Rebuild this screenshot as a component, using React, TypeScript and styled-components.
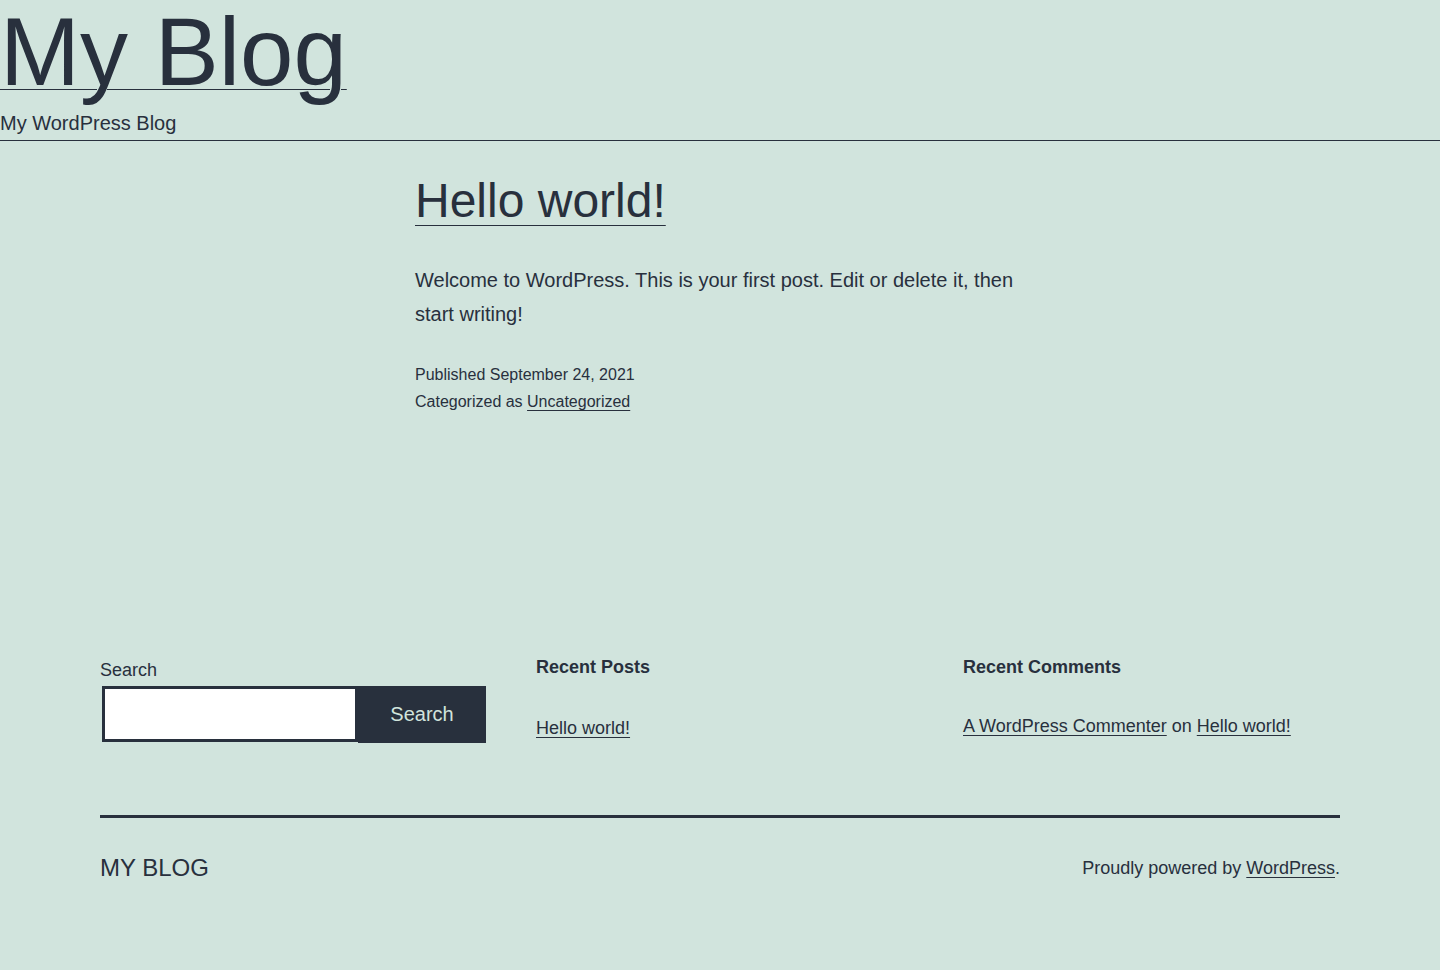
import styled, { createGlobalStyle } from "styled-components";

const ink = "#28303d";
const mint = "#d1e4dd";

const GlobalStyle = createGlobalStyle`
    html, body {
        margin: 0;
        padding: 0;
        background: ${ mint };
        color: ${ ink };
        font-family: "Liberation Sans", Arial, sans-serif;
    }
    a {
        color: ${ ink };
        text-decoration: underline;
        text-decoration-thickness: 1px;
        text-underline-offset: 3px;
    }
`;

const Page = styled.div`
    min-height: 970px;
    display: flex;
    flex-direction: column;
`;

const Header = styled.header`
    border-bottom: 1px solid ${ ink };
    padding-bottom: 5px;
`;

const SiteTitle = styled.h1`
    margin: 0;
    font-size: 96px;
    font-weight: 400;
    line-height: 104px;

    a {
        text-underline-offset: 4px;
    }
`;

const Tagline = styled.p`
    margin: 8px 0 0;
    font-size: 20px;
    line-height: 23px;
`;

const Main = styled.main`
    width: 610px;
    margin: 31px auto 0;
`;

const PostTitle = styled.h2`
    margin: 0;
    font-size: 48px;
    font-weight: 400;
    line-height: 58px;

    a {
        text-underline-offset: 8px;
    }
`;

const PostBody = styled.p`
    margin: 33px 0 0;
    font-size: 20px;
    line-height: 34px;
`;

const Meta = styled.div`
    margin-top: 30px;
    font-size: 16px;
    line-height: 27px;
`;

const Widgets = styled.section`
    display: grid;
    grid-template-columns: 386px 1fr 1fr;
    column-gap: 50px;
    width: 1240px;
    margin: 239px auto 0;
    align-items: start;
`;

const Widget = styled.div`
    display: flex;
    flex-direction: column;
`;

const SearchLabel = styled.label`
    font-size: 18px;
    line-height: 27px;
    margin-top: 3px;
`;

const SearchRow = styled.div`
    display: flex;
    margin-top: 2px;
`;

const SearchInput = styled.input`
    box-sizing: border-box;
    width: 256px;
    height: 56px;
    margin: 0 0 0 2px;
    border: 3px solid ${ ink };
    background: #fff;
    outline: none;
    font-size: 18px;
`;

const SearchButton = styled.button`
    box-sizing: border-box;
    width: 128px;
    height: 57px;
    border: none;
    background: ${ ink };
    color: ${ mint };
    font-family: "Liberation Sans", Arial, sans-serif;
    font-size: 20px;
    cursor: pointer;
`;

const WidgetTitle = styled.h2`
    margin: 0;
    font-size: 18px;
    font-weight: 700;
    line-height: 27px;
`;

const WidgetList = styled.ul<{ $gap: number }>`
    list-style: none;
    margin: ${ (props) => props.$gap + "px" } 0 0;
    padding: 0;
    font-size: 18px;
    line-height: 27px;
`;

const Footer = styled.footer`
    width: 1240px;
    margin: 72px auto 0;
    border-top: 3px solid ${ ink };
    display: flex;
    justify-content: space-between;
    align-items: center;
    padding-top: 35px;
`;

const FooterName = styled.div`
    font-size: 24px;
    line-height: 30px;
    text-transform: uppercase;
`;

const PoweredBy = styled.div`
    font-size: 18px;
    line-height: 27px;
`;

export default function App() {
    return (
        <Page>
            <GlobalStyle />
            <Header>
                <SiteTitle><a href="#">My Blog</a></SiteTitle>
                <Tagline>My WordPress Blog</Tagline>
            </Header>

            <Main>
                <PostTitle><a href="#">Hello world!</a></PostTitle>
                <PostBody>Welcome to WordPress. This is your first post. Edit or delete it, then start writing!</PostBody>
                <Meta>
                    <div>Published September 24, 2021</div>
                    <div>Categorized as <a href="#">Uncategorized</a></div>
                </Meta>
            </Main>

            <Widgets>
                <Widget>
                    <SearchLabel htmlFor="s">Search</SearchLabel>
                    <SearchRow>
                        <SearchInput id="s" type="search" />
                        <SearchButton>Search</SearchButton>
                    </SearchRow>
                </Widget>
                <Widget>
                    <WidgetTitle>Recent Posts</WidgetTitle>
                    <WidgetList $gap={34}>
                        <li><a href="#">Hello world!</a></li>
                    </WidgetList>
                </Widget>
                <Widget>
                    <WidgetTitle>Recent Comments</WidgetTitle>
                    <WidgetList $gap={32}>
                        <li><a href="#">A WordPress Commenter</a> on <a href="#">Hello world!</a></li>
                    </WidgetList>
                </Widget>
            </Widgets>

            <Footer>
                <FooterName>My Blog</FooterName>
                <PoweredBy>Proudly powered by <a href="#">WordPress</a>.</PoweredBy>
            </Footer>
        </Page>
    );
}
